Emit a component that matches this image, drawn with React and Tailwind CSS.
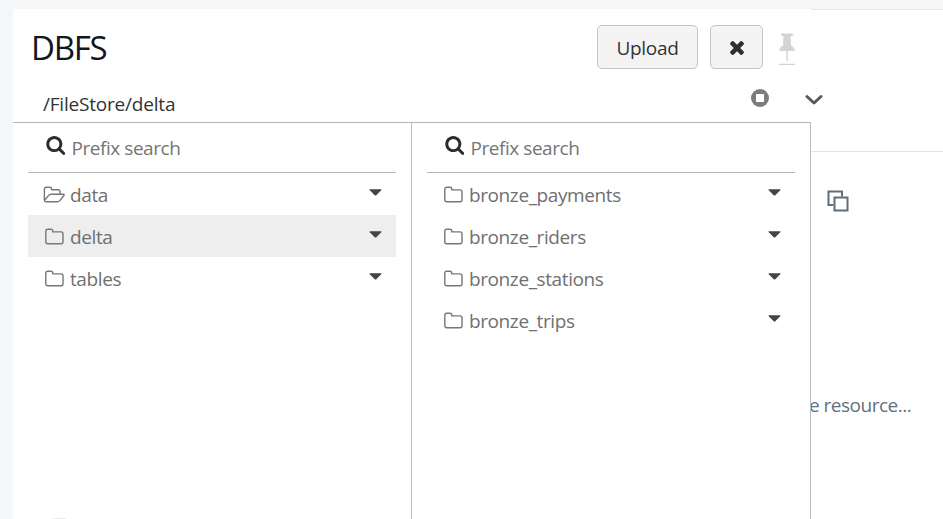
const searchPath =
  "M1216 832q0-185-131.5-316.5t-316.5-131.5-316.5 131.5-131.5 316.5 131.5 316.5 316.5 131.5 316.5-131.5 131.5-316.5zm512 832q0 52-38 90t-90 38q-54 0-90-38l-343-342q-179 124-399 124-143 0-273.5-55.5t-225-150-150-225-55.5-273.5 55.5-273.5 150-225 225-150 273.5-55.5 273.5 55.5 225 150 150 225 55.5 273.5q0 220-124 399l343 343q37 37 37 90z";
const timesPath =
  "M1490 1322q0 40-28 68l-136 136q-28 28-68 28t-68-28l-294-294-294 294q-28 28-68 28t-68-28l-136-136q-28-28-28-68t28-68l294-294-294-294q-28-28-28-68t28-68l136-136q28-28 68-28t68 28l294 294 294-294q28-28 68-28t68 28l136 136q28 28 28 68t-28 68l-294 294 294 294q28 28 28 68z";

function Folder({ open }) {
  return (
    <svg className="block h-[18px] w-[22px] shrink-0" viewBox="0 0 22 18" fill="none" stroke="#777" strokeWidth="1.4" strokeLinejoin="round">
      {open ? (
        <>
          <path d="M1.4 14.2V3.2Q1.4 1.2 3.4 1.2H6.6Q8.6 1.2 8.6 3.2V3.7H15Q17 3.7 17 5.7V8" />
          <path d="M1.4 14.2Q1.4 15.8 3.2 15.8H14.4Q15.9 15.8 16.8 14.6L20.8 9.7Q21.8 8.2 20 8.2H8.2Q6.7 8.2 5.5 9.6Z" />
        </>
      ) : (
        <path d="M2.8 3.2Q2.8 1.2 4.8 1.2H7.8Q9.8 1.2 9.8 3.2V3.9H18Q20 3.9 20 5.9V13.7Q20 15.7 18 15.7H4.8Q2.8 15.7 2.8 13.7Z" />
      )}
    </svg>
  );
}

function Row({ name, open, selected }) {
  return (
    <li className={`flex h-[42px] items-center pl-[15px] pr-[14px] pt-px ${selected ? "bg-[#eee]" : ""}`}>
      <Folder open={open} />
      <span className="ml-[5px] mt-px text-[19px] leading-6 tracking-[-0.4px] text-[#707070]">{name}</span>
      <svg className="mb-[5px] ml-auto h-[7px] w-[13px]" viewBox="0 0 13 7" fill="#444">
        <path d="M1 0.3H12Q13 0.4 12.2 1.3L7.3 6.2Q6.5 6.9 5.7 6.2L0.8 1.3Q0 0.4 1 0.3Z" />
      </svg>
    </li>
  );
}

function Column({ items, children }) {
  return (
    <div className="flex w-[399px] flex-col border-r border-[#bbb] px-[15px]">
      <div className="flex h-[50px] shrink-0 items-center border-b border-[#b5b5b5] pl-[18px]">
        <svg className="mb-1 h-[19px] w-[19px]" viewBox="40 128 1664 1664" fill="#2b2b2b">
          <path d={searchPath} />
        </svg>
        <span className="ml-[6.5px] text-[19px] leading-6 tracking-[-0.45px] text-[#757575]">Prefix search</span>
      </div>
      <ul>
        {items.map((item) => (
          <Row key={item.name} {...item} />
        ))}
      </ul>
      {children}
    </div>
  );
}

const left = [{ name: "data", open: true }, { name: "delta", selected: true }, { name: "tables" }];
const right = [{ name: "bronze_payments" }, { name: "bronze_riders" }, { name: "bronze_stations" }, { name: "bronze_trips" }];

export default function App() {
  return (
    <div className="flex h-[519px] w-[943px] overflow-hidden bg-[#f5f6f8] pl-[13px] pt-[9px] font-['Open_Sans','Noto_Sans',sans-serif]">
      <main className="z-10 flex w-[798px] shrink-0 flex-col bg-white">
        <header className="flex h-[73px] shrink-0 items-start pl-[18px] pt-4">
          <h1 className="mt-[1px] text-[33px] leading-[44px] tracking-[-1.3px] text-[#11171c]">DBFS</h1>
          <button className="ml-auto h-11 w-[101px] rounded-[5px] border border-[#c4c4c4] bg-[#f4f4f4] pt-[2px] text-[19px] tracking-[-0.3px] text-[#333]">Upload</button>
          <button className="ml-3 flex h-11 w-[53px] items-center justify-center rounded-[5px] border border-[#c4c4c4] bg-[#f4f4f4]">
            <svg className="mt-[2px] h-[14px] w-[14px]" viewBox="302 366 1188 1188" fill="#2b3034">
              <path d={timesPath} />
            </svg>
          </button>
          <svg className="ml-4 mr-4 mt-2 h-8 w-4" viewBox="0 0 16 32" fill="#d4d4d4">
            <path d="M3 0.5H13Q14 0.5 14 1.5T13 3H11.5L12 12.5Q15.7 14.5 15.8 18H0.2Q0.3 14.5 4 12.5L4.5 3H3Q2 2.5 2 1.5T3 0.5Z" />
            <path d="M7.3 18H8.8V27L8 29L7.3 27ZM0 30.8H16V32H0Z" />
          </svg>
        </header>
        <div className="flex h-10 shrink-0 items-start pl-[30px] pt-[3px]">
          <span className="mt-[7px] text-[19px] leading-6 tracking-[-0.2px] text-[#333]">/FileStore/delta</span>
          <svg className="ml-auto mr-[36px] mt-1 h-[18px] w-[18px]" viewBox="0 0 18 18">
            <circle cx="9" cy="9" r="9" fill="#7d7d7d" />
            <rect x="5" y="5" width="8" height="8" rx="0.5" fill="#fff" />
          </svg>
          <svg className="-mr-3 mt-[9px] h-[12px] w-[18px] shrink-0" viewBox="0 0 18 12" fill="none" stroke="#5a5a5a" strokeWidth="3" strokeLinecap="round" strokeLinejoin="round">
            <path d="M2 2.5L9 9L16 2.5" />
          </svg>
        </div>
        <div className="flex grow border-t border-[#b5b5b5]">
          <Column items={left}>
            <div className="ml-6 mt-auto h-px w-3.5 bg-[#ededed]" />
          </Column>
          <Column items={right} />
        </div>
      </main>
      <aside className="flex grow flex-col border-t border-[#e4e6e9] bg-white">
        <div className="h-[142px] shrink-0 border-b border-[#e3e5e8]" />
        <svg className="ml-4 mt-[38px] h-[22px] w-[22px] shrink-0" viewBox="0 0 22 22" fill="none" stroke="#5f6f7a" strokeWidth="2">
          <path d="M6.5 15H1.5V1.5H15V6.5" />
          <rect x="7.5" y="7.5" width="13" height="13" />
        </svg>
        <p className="-ml-0.5 mt-[181px] whitespace-nowrap text-[19px] leading-6 tracking-[-0.5px] text-[#5f7281]">e resource...</p>
      </aside>
    </div>
  );
}
